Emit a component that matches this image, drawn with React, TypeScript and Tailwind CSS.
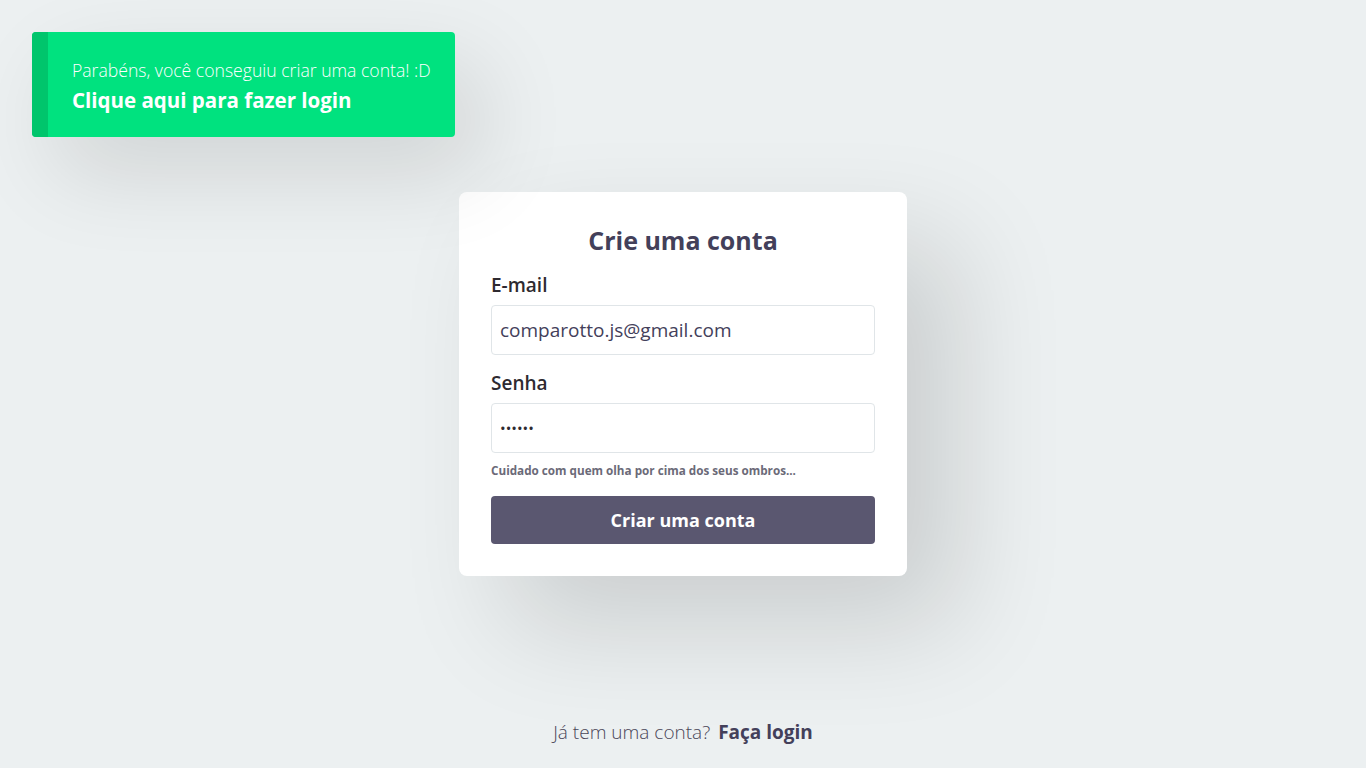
import React from 'react';

const font = { fontFamily: '"Open Sans", "Liberation Sans", sans-serif' };

const Toast: React.FC = () => (
  <div className="absolute left-8 top-8 flex h-[105px] w-[423px] overflow-hidden rounded bg-[#00e27f] shadow-[25px_35px_90px_rgba(0,0,0,0.12)]">
    <div className="w-4 bg-[#00c56c]" />
    <div className="flex flex-col justify-center pl-6 text-white">
      <p className="text-[17.6px] font-light leading-6">Parabéns, você conseguiu criar uma conta! :D</p>
      <a href="#" className="mt-[6px] text-[20.5px] font-bold leading-6">
        Clique aqui para fazer login
      </a>
    </div>
  </div>
);

const App: React.FC = () => {
  return (
    <div style={font} className="relative flex h-[768px] w-full flex-col bg-[#ecf0f1]">
      <Toast />
      <div className="flex flex-1 items-center justify-center pt-[50px]">
        <form
          className="flex w-[448px] flex-col rounded-lg bg-white px-8 pb-8 pt-7 shadow-[50px_50px_110px_rgba(0,0,0,0.14)]"
          onSubmit={e => e.preventDefault()}
        >
          <h1 className="text-center text-[25px] font-bold leading-10 text-[#43405a]">Crie uma conta</h1>
          <label className="mt-[11px] text-[19px] font-semibold leading-7 text-[#2e2a30]">E-mail</label>
          <input
            className="mt-[6px] h-[50px] rounded border border-[#e0e5e8] px-2 text-[19px] text-[#43405a] outline-none"
            defaultValue="comparotto.js@gmail.com"
          />
          <label className="mt-[14px] text-[19px] font-semibold leading-7 text-[#2e2a30]">Senha</label>
          <input
            type="password"
            className="mt-[6px] h-[50px] rounded border border-[#e0e5e8] px-2 text-[15px] text-[#2e2a30] outline-none"
            defaultValue="123456"
          />
          <p className="mt-[9px] text-[11.7px] font-bold leading-4 text-[#6b6a78]">
            Cuidado com quem olha por cima dos seus ombros...
          </p>
          <button className="mt-[18px] h-12 rounded bg-[#5a5770] text-[18px] font-bold text-white">
            Criar uma conta
          </button>
        </form>
      </div>
      <p className="pb-[22px] text-center text-[19px] leading-7 text-[#4a4658]">
        <span className="font-light">Já tem uma conta?</span>
        <a href="#" className="ml-2 font-bold text-[#43405a]">
          Faça login
        </a>
      </p>
    </div>
  );
};

export default App;
